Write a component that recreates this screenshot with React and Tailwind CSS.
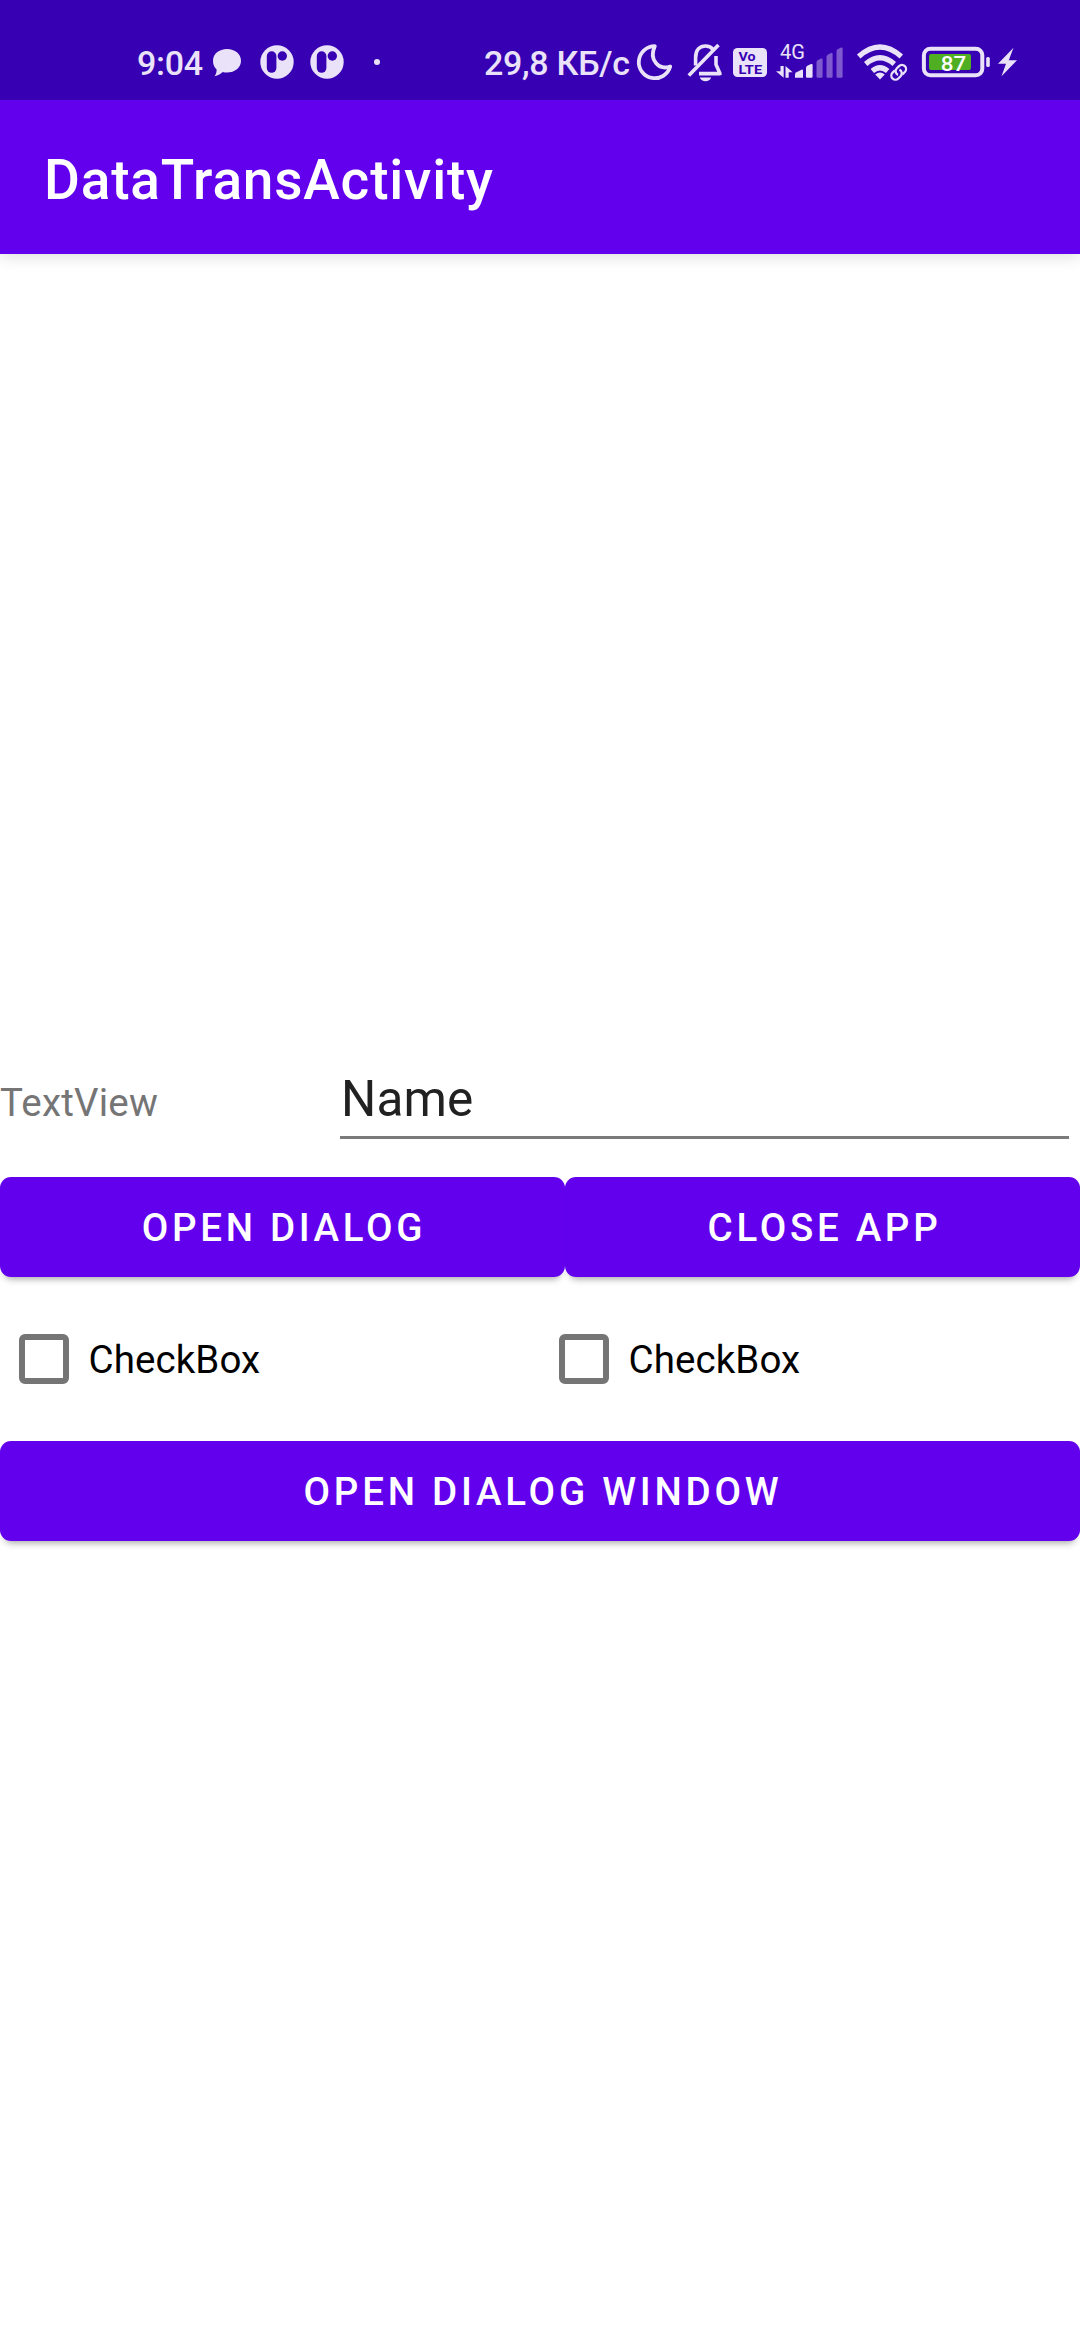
const INK = "#e9e2f8";

function ChatIcon() {
  return (
    <svg className="ml-[11px] h-[100px] w-[30px]" viewBox="212 0 30 100" fill={INK}>
      <path d="M227 49c8 0 14 5 14 11.800s-6 11.800-14 11.800c-1.600 0-3-.2-4.300-.6-1.700 1.900-4.600 3.600-8.200 4.300 1.500-1.700 2.200-4.200 2.100-6.700C214.300 67.600 213 64.500 213 60.800c0-6.800 6-11.800 14-11.800z" />
    </svg>
  );
}

function PinIcon({ className }) {
  return (
    <svg className={className} viewBox="260 0 34 100">
      <circle cx="277" cy="62" r="16.700" fill={INK} />
      <rect x="266.800" y="51.300" width="9.600" height="21.500" rx="4.800" fill="#3700b3" />
      <circle cx="282.300" cy="56" r="4.700" fill="#3700b3" />
    </svg>
  );
}

function StatusIcons() {
  return (
    <svg className="h-[100px] w-[392px] shrink-0" viewBox="636 0 392 100" fontFamily="Roboto, sans-serif">
      {/* moon */}
      <path d="M654.800 46.200A16 16 0 1 0 670.200 66.500C659 70.500 648.500 60 654.800 46.200Z" fill="none" stroke={INK} strokeWidth="3.800" strokeLinejoin="round" />
      {/* muted bell */}
      <g fill="none" stroke={INK} strokeWidth="3.600">
        <path d="M695.600 65.500V58C695.600 49.500 700 46 705.500 46C709 46 711.500 47.300 713 49.300" />
        <path d="M716 56V64.500L720 73.600H699" strokeLinejoin="round" />
        <path d="M688.800 75.500L718.500 45" />
      </g>
      <path d="M699.800 77.500h11.400c-1 2.500-3 3.800-5.700 3.800s-4.700-1.300-5.700-3.800z" fill={INK} />
      {/* VoLTE */}
      <rect x="733" y="48" width="34" height="29" rx="4.500" fill={INK} />
      <text x="738.500" y="61" fontSize="12" fontWeight="700" fill="#3700b3" textLength="17" lengthAdjust="spacingAndGlyphs">Vo</text>
      <text x="738.600" y="73.700" fontSize="12.500" fontWeight="700" fill="#3700b3" textLength="23.500" lengthAdjust="spacingAndGlyphs">LTE</text>
      {/* mobile data */}
      <text x="780" y="59" fontSize="20" fill={INK} textLength="25" lengthAdjust="spacingAndGlyphs">4G</text>
      <path d="M780.500 66h3.200v11.700l-7.700-6.400h4.500zM785.500 77.700V66l7.200 6.200h-4v5.500z" fill={INK} />
      <g fill={INK}>
        <path d="M795 77.700V74.500Q795 73 796.500 72.200L801.500 69.700Q803 69 803 70.500V77.700Z" />
        <path d="M806 76.500V68Q806 66.500 807.300 65.700L811 64Q812.600 63.500 812.600 65V76.500Q812.600 77.700 811.400 77.700H807.200Q806 77.700 806 76.500Z" />
      </g>
      <g fill={INK} opacity="0.4">
        <path d="M816.500 76.500V62.500Q816.500 61 817.800 60.200L821 58.600Q822.600 58 822.600 59.500V76.500Q822.600 77.700 821.400 77.700H817.700Q816.500 77.700 816.500 76.500Z" />
        <path d="M826.500 76.500V57Q826.500 55.500 827.800 54.700L831 53.100Q832.600 52.500 832.600 54V76.500Q832.600 77.700 831.400 77.700H827.700Q826.500 77.700 826.500 76.500Z" />
        <path d="M836.500 76.500V51.500Q836.500 50 837.800 49.200L841 47.600Q842.600 47 842.600 48.500V76.500Q842.600 77.700 841.400 77.700H837.700Q836.500 77.700 836.500 76.500Z" />
      </g>
      {/* wifi with link */}
      <g fill="none" stroke={INK} strokeWidth="5.200">
        <path d="M858.700 56.500Q880 37.500 901.300 56.500" />
        <path d="M865.700 64Q880 51.500 894.300 64" />
        <path d="M872.300 71Q880 64.500 887.700 71" />
      </g>
      <path d="M880 79.500L875.200 74.500Q880 70.700 884.800 74.500Z" fill={INK} />
      <g transform="rotate(-45 898.700 72.300)" fill="none" stroke={INK} strokeWidth="2.300">
        <path d="M897.500 68.200h-3.400a4.100 4.100 0 0 0 0 8.200h3.400a4.100 4.100 0 0 0 3.600-5.500" />
        <path d="M899.900 76.400h3.400a4.100 4.100 0 0 0 0-8.200h-3.400a4.100 4.100 0 0 0-3.600 5.500" />
      </g>
      {/* battery */}
      <rect x="923.900" y="48.800" width="58.400" height="26.400" rx="6.500" fill="none" stroke={INK} strokeWidth="4" />
      <rect x="986.200" y="57" width="3.600" height="10" rx="1.500" fill={INK} />
      <rect x="929" y="54" width="42" height="16" rx="2" fill="#50ae22" />
      <text x="940.700" y="70.700" fontSize="21" fontWeight="500" fill="#fff" textLength="25.500" lengthAdjust="spacingAndGlyphs">87</text>
      <path d="M1013.500 47.800L998 63.700H1006L1001.500 76.300L1017 60.300H1008.800Z" fill={INK} />
    </svg>
  );
}

function StatusBar() {
  return (
    <div className="relative z-10 flex h-[100px] shrink-0 items-center bg-[#3700b3] pl-[137px] text-[#e9e2f8]">
      <span className="w-[64px] pt-[25px] text-[34px] leading-[50px] font-medium tracking-[-0.3px] whitespace-nowrap">9:04</span>
      <ChatIcon />
      <PinIcon className="ml-[18px] h-[100px] w-[34px]" />
      <PinIcon className="ml-4 h-[100px] w-[34px]" />
      <span className="mt-6 ml-[30px] h-1.5 w-1.5 rounded-full bg-[#e9e2f8]" />
      <span className="ml-[104px] w-[152px] pt-[25px] text-[34px] leading-[50px] font-medium tracking-[-0.3px] whitespace-nowrap">29,8 КБ/с</span>
      <StatusIcons />
    </div>
  );
}

function Button({ className, children }) {
  return (
    <button
      className={
        "h-[100px] rounded-[11px] bg-[#6200ee] pt-[2px] text-[38.500px] font-medium text-white uppercase shadow-[0_7px_7px_-5px_rgba(0,0,0,0.35)] " +
        className
      }
    >
      {children}
    </button>
  );
}

function CheckBox() {
  return (
    <label className="flex w-1/2 items-center pl-[19px] text-[38.500px] text-black">
      <span className="h-[50px] w-[50px] rounded-[6px] border-[6px] border-[#757575]" />
      <span className="ml-[19.500px] pt-px tracking-[0.1px]">CheckBox</span>
    </label>
  );
}

export default function App() {
  return (
    <div className="flex h-[2340px] w-[1080px] flex-col overflow-hidden bg-white font-[Roboto,sans-serif]">
      <StatusBar />
      <header className="flex h-[154px] shrink-0 items-center bg-[#6200ee] pt-[6px] pl-[44px] text-[55px] font-medium tracking-[0.8px] text-white shadow-[0_3px_14px_rgba(0,0,0,0.13)]">
        DataTransActivity
      </header>
      <main className="flex flex-col pt-[796px]">
        <div className="flex h-[127px] items-start">
          <span className="w-[340px] pt-[30px] text-[38.500px] leading-[46px] tracking-[0.2px] text-[#757575]">TextView</span>
          <div className="h-[89px] w-[729px] border-b-[3px] border-[#7b7b7b] pt-[20px] pl-px text-[49.500px] leading-[58px] tracking-[0.1px] text-[#212121]">
            Name
          </div>
        </div>
        <div className="flex">
          <Button className="relative z-10 w-[565px] pl-[3px] tracking-[3.670px]">Open dialog</Button>
          <Button className="w-[515px] pl-1 tracking-[3.700px]">Close app</Button>
        </div>
        <div className="flex h-[164px] items-center">
          <CheckBox />
          <CheckBox />
        </div>
        <Button className="w-full pl-[6px] tracking-[3.760px]">Open dialog window</Button>
      </main>
    </div>
  );
}
